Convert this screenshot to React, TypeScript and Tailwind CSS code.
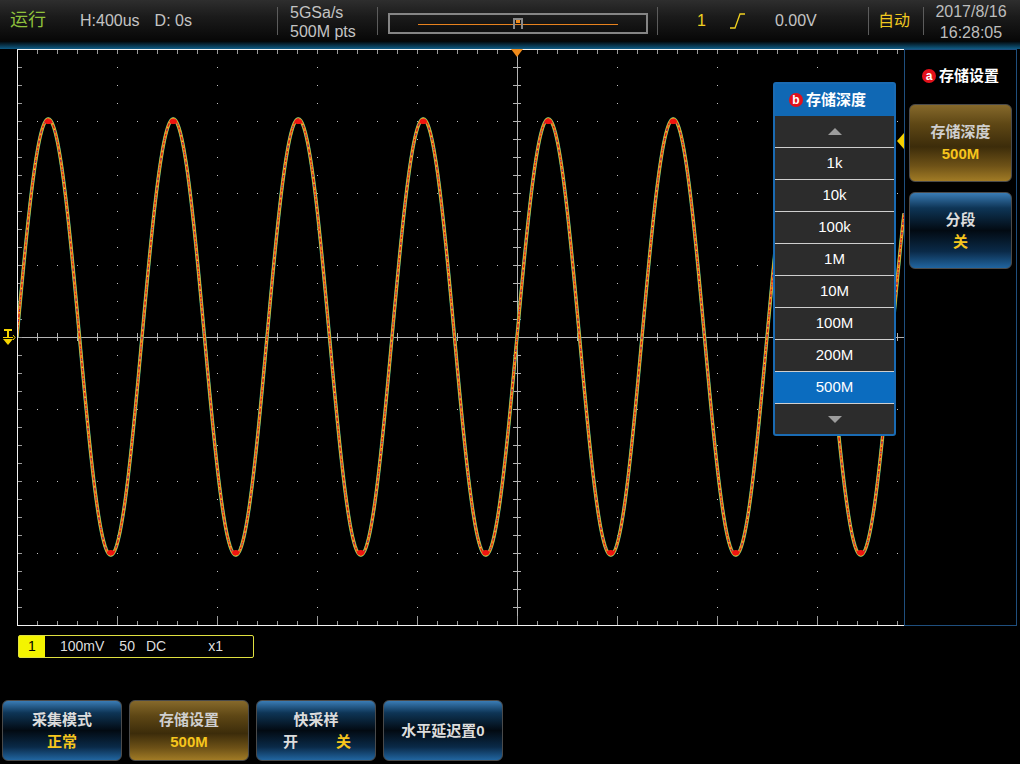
import React from 'react';

const FONT = "font-['Liberation_Sans','Noto_Sans_CJK_SC',sans-serif]";
const BLUE_BTN =
  'bg-[linear-gradient(to_bottom,#3a7cb5_0%,#0e3556_20%,#020a12_50%,#0a2a48_78%,#2165a0_100%)]';
const GOLD_BTN =
  'bg-[linear-gradient(to_bottom,#86692b_0%,#5e4715_25%,#3c2c0a_55%,#6e5217_80%,#a17b25_100%)]';

const Sep = () => <div className="w-px h-[28px] bg-[#5c5c5c]" />;

const Badge = ({ ch }: { ch: string }) => (
  <span className="w-[14px] h-[14px] rounded-full bg-[#e3111b] text-white text-[12px] font-bold leading-[14px] flex items-center justify-center">
    {ch}
  </span>
);

function tracePath() {
  let d = '';
  for (let x = 17; x <= 904; x += 0.5) {
    const y = 337 - 218 * Math.sin((2 * Math.PI * (x - 517)) / 125);
    d += (x === 17 ? 'M' : 'L') + x + ' ' + y.toFixed(2);
  }
  return d;
}

const peaks = [48.25, 173.25, 298.25, 423.25, 548.25, 673.25, 798.25];
const troughs = [110.75, 235.75, 360.75, 485.75, 610.75, 735.75, 860.75];

const Grid = () => {
  const dots: React.ReactNode[] = [];
  // dots on vertical grid lines
  for (let gx = 117; gx <= 817; gx += 100) {
    if (gx === 517) continue;
    for (let y = 67; y < 625; y += 18) {
      dots.push(<rect key={`v${gx}-${y}`} x={gx} y={y} width={1} height={1} fill="#c4c4c4" />);
    }
  }
  // dots on horizontal grid lines
  for (const gy of [121, 193, 265, 409, 481, 553]) {
    for (let x = 37; x < 904; x += 20) {
      dots.push(<rect key={`h${gy}-${x}`} x={x} y={gy} width={1} height={1} fill="#c4c4c4" />);
    }
  }
  const ticks: React.ReactNode[] = [];
  for (let x = 37; x < 904; x += 20) {
    const major = (x - 17) % 100 === 0;
    ticks.push(<line key={`ct${x}`} x1={x + 0.5} y1={333} x2={x + 0.5} y2={341} stroke="#b4b4b4" />);
    ticks.push(<line key={`tt${x}`} x1={x + 0.5} y1={50} x2={x + 0.5} y2={54} stroke="#9a9a9a" />);
    ticks.push(
      <line key={`bt${x}`} x1={x + 0.5} y1={major ? 616 : 621} x2={x + 0.5} y2={625} stroke="#9a9a9a" />
    );
  }
  for (let y = 67; y < 625; y += 18) {
    ticks.push(<line key={`cv${y}`} x1={513} y1={y + 0.5} x2={521} y2={y + 0.5} stroke="#b4b4b4" />);
    ticks.push(<line key={`lv${y}`} x1={18} y1={y + 0.5} x2={22} y2={y + 0.5} stroke="#9a9a9a" />);
  }
  const d = tracePath();
  return (
    <svg className="absolute inset-0" width={887} height={577} viewBox="17 49 887 577">
      <defs>
        <clipPath id="plot">
          <rect x={18} y={50} width={886} height={575} />
        </clipPath>
      </defs>
      {dots}
      <line x1={17} y1={337.5} x2={904} y2={337.5} stroke="#b4b4b4" />
      <line x1={517.5} y1={49} x2={517.5} y2={625} stroke="#b4b4b4" />
      {ticks}
      <line x1={17.5} y1={49} x2={17.5} y2={626} stroke="#f2f2f2" />
      <line x1={17} y1={49.5} x2={904} y2={49.5} stroke="#f2f2f2" />
      <line x1={17} y1={625.5} x2={904} y2={625.5} stroke="#f2f2f2" />
      <g clipPath="url(#plot)" fill="none" strokeLinejoin="round">
        <path d={d} stroke="#23a48c" strokeWidth={3.6} />
        <path d={d} stroke="#f2b523" strokeWidth={2.9} />
        <path d={d} stroke="#ec6a1c" strokeWidth={1.6} />
        <path d={d} stroke="#c8141c" strokeWidth={1.1} strokeDasharray="3 2" />
        <path d={d} stroke="#ffe24a" strokeWidth={0.9} strokeDasharray="1 5" />
        <path d={d} stroke="#4150c4" strokeWidth={0.9} strokeDasharray="1 9" strokeDashoffset={4} />
        {peaks.map((px) => (
          <ellipse key={`p${px}`} cx={px} cy={121.5} rx={3.6} ry={2.6} fill="#ee1410" />
        ))}
        {troughs.map((px) => (
          <ellipse key={`t${px}`} cx={px} cy={552.5} rx={3.6} ry={2.6} fill="#ee1410" />
        ))}
      </g>
      <polygon points="511,49 523,49 517,57" fill="#f08a1a" />
    </svg>
  );
};

const depths = ['1k', '10k', '100k', '1M', '10M', '100M', '200M', '500M'];

const DepthMenu = () => (
  <div className="absolute left-[756px] top-[33px] w-[123px] border-2 border-[#1a6bb3] rounded-[3px] bg-[#2c2c2c] flex flex-col">
    <div className="h-[32px] bg-[#1068b4] flex items-center gap-[3px] pl-[14px] text-white text-[15px] font-bold">
      <Badge ch="b" />
      <span>存储深度</span>
    </div>
    <div className="h-[32px] flex items-center justify-center border-b border-[#cfcfcf]">
      <svg width={14} height={7}>
        <polygon points="0,7 14,7 7,0" fill="#9c9c9c" />
      </svg>
    </div>
    {depths.map((d) => (
      <div
        key={d}
        className={
          d === '500M'
            ? 'h-[32px] flex items-center justify-center border-b border-[#cfcfcf] bg-[#0b6cbf] text-white text-[15px]'
            : 'h-[32px] flex items-center justify-center border-b border-[#cfcfcf] text-white text-[15px]'
        }
      >
        {d}
      </div>
    ))}
    <div className="h-[30px] flex items-center justify-center">
      <svg width={14} height={7}>
        <polygon points="0,0 14,0 7,7" fill="#9c9c9c" />
      </svg>
    </div>
  </div>
);

const SoftButton = ({
  gold,
  className,
  children,
}: {
  gold?: boolean;
  className: string;
  children: React.ReactNode;
}) => (
  <div
    className={`${className} rounded-[6px] border border-[#4a4a4a] flex flex-col items-center justify-center gap-[3px] text-[15px] font-bold leading-[19px] ${
      gold ? GOLD_BTN : BLUE_BTN
    }`}
  >
    {children}
  </div>
);

export default function App() {
  return (
    <div className={`w-[1020px] h-[764px] bg-black overflow-hidden flex flex-col ${FONT}`}>
      {/* header */}
      <div className="h-[41px] flex items-center bg-[linear-gradient(to_bottom,#2e2e2e_0%,#1b1b1b_40%,#070707_100%)] text-[16px] text-[#c4c4c4]">
        <div className="w-[277px] flex items-center">
          <span className="ml-[10px] text-[18px] text-[#8fc23c]">运行</span>
          <span className="ml-[34px]">H:400us</span>
          <span className="ml-[15px]">D: 0s</span>
        </div>
        <Sep />
        <div className="w-[99px] pl-[12px] flex flex-col leading-[19px] mt-[2px]">
          <span>5GSa/s</span>
          <span>500M pts</span>
        </div>
        <Sep />
        <div className="w-[279px] pl-[10px] mt-[5px]">
          <div className="w-[260px] h-[21px] border-2 border-[#858585]">
            <svg width={256} height={17}>
              <line x1={28} y1={9.5} x2={228} y2={9.5} stroke="#e8821e" />
              <rect x={123} y={3} width={10} height={2} fill="#8a8a8a" />
              <rect x={123} y={3} width={2} height={11} fill="#8a8a8a" />
              <rect x={131} y={3} width={2} height={11} fill="#8a8a8a" />
              <rect x={126} y={5} width={4} height={3} fill="#f08a1a" />
            </svg>
          </div>
        </div>
        <Sep />
        <div className="w-[210px] flex items-center text-[#f0d020]">
          <span className="ml-[39px]">1</span>
          <svg className="ml-[24px]" width={15} height={16}>
            <polyline points="0,15 5,15 10,1 15,1" fill="none" stroke="#f0d020" strokeWidth={1.3} />
          </svg>
          <span className="ml-[30px] text-[#c4c4c4]">0.00V</span>
        </div>
        <Sep />
        <div className="w-[54px] flex items-center">
          <span className="ml-[9px] text-[#f0c820]">自动</span>
        </div>
        <Sep />
        <div className="w-[94px] flex flex-col items-center leading-[21px] mt-[3px] text-[#bdbdbd]">
          <span>2017/8/16</span>
          <span>16:28:05</span>
        </div>
      </div>
      <div className="h-[8px] bg-[linear-gradient(to_bottom,#030303,#0e5c86)]" />

      {/* scope area */}
      <div className="h-[577px] flex">
        <div className="w-[17px] flex items-center justify-center">
          <svg width={14} height={17}>
            <g fill="#f5d400" stroke="#f5d400">
              <line x1={2} y1={1} x2={10} y2={1} strokeWidth={2} />
              <line x1={6} y1={1} x2={6} y2={8} strokeWidth={2} />
              <line x1={1} y1={8.5} x2={11} y2={8.5} strokeWidth={1} />
              <polygon points="1,10 11,10 6,16" strokeWidth={0} />
              <polyline points="11,6 13,8.5 11,11" fill="none" strokeWidth={1} />
            </g>
          </svg>
        </div>
        <div className="w-[887px] relative">
          <Grid />
          <DepthMenu />
          <svg className="absolute left-[880px] top-[84px]" width={7} height={16}>
            <polygon points="7,0 0,8 7,16" fill="#f5d000" />
          </svg>
        </div>
        <div className="w-[113px] border border-[#1f4f7e] flex flex-col items-center">
          <div className="mt-[15px] flex items-center gap-[3px] text-white text-[15px] font-bold">
            <Badge ch="a" />
            <span>存储设置</span>
          </div>
          <SoftButton gold className="mt-[16px] w-[103px] h-[78px]">
            <span className="text-[#cfcfcf]">存储深度</span>
            <span className="text-[#f6c51d]">500M</span>
          </SoftButton>
          <SoftButton className="mt-[10px] w-[103px] h-[77px]">
            <span className="text-[#dcdcdc]">分段</span>
            <span className="text-[#f6c51d]">关</span>
          </SoftButton>
        </div>
      </div>

      {/* channel info */}
      <div className="mt-[9px] ml-[18px] w-[236px] h-[23px] border border-[#e0e040] rounded-[2px] flex items-center text-[14px] text-[#dedede]">
        <div className="w-[26px] h-full bg-[#f4f400] text-black flex items-center justify-center">1</div>
        <span className="ml-[15px]">100mV</span>
        <span className="ml-[15px]">50</span>
        <span className="ml-[11px]">DC</span>
        <span className="ml-[42px]">x1</span>
      </div>

      {/* soft keys */}
      <div className="mt-[42px] ml-[2px] flex gap-[7px]">
        <SoftButton className="w-[120px] h-[61px]">
          <span className="text-[#dcdcdc]">采集模式</span>
          <span className="text-[#f6c51d]">正常</span>
        </SoftButton>
        <SoftButton gold className="w-[120px] h-[61px]">
          <span className="text-[#cfcfcf]">存储设置</span>
          <span className="text-[#f6c51d]">500M</span>
        </SoftButton>
        <SoftButton className="w-[120px] h-[61px]">
          <span className="text-[#dcdcdc]">快采样</span>
          <span className="flex gap-[38px] pl-[2px]">
            <span className="text-[#dcdcdc]">开</span>
            <span className="text-[#f6c51d]">关</span>
          </span>
        </SoftButton>
        <SoftButton className="w-[120px] h-[61px]">
          <span className="text-[#dcdcdc]">水平延迟置0</span>
        </SoftButton>
      </div>
    </div>
  );
}
